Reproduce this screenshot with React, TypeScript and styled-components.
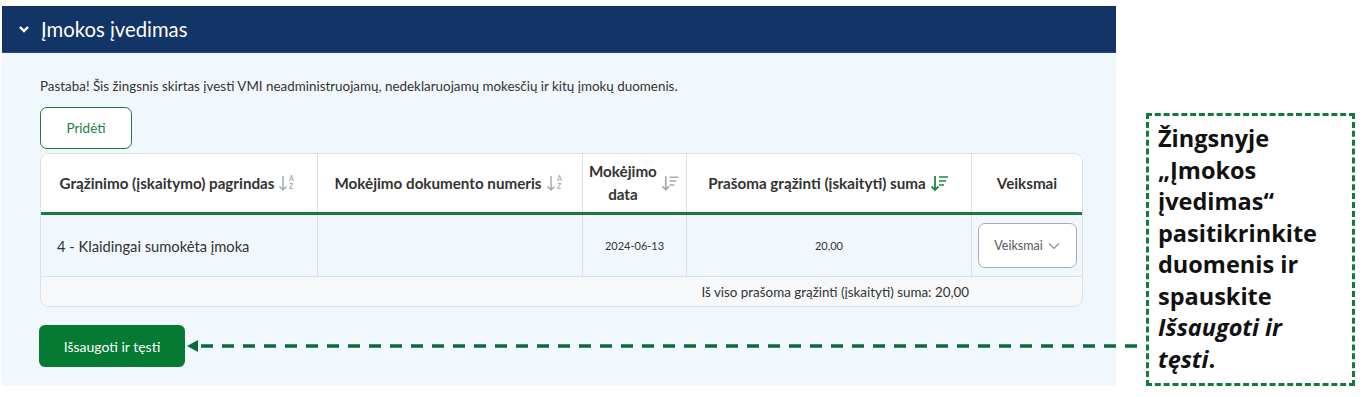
import styled, { createGlobalStyle } from 'styled-components';

const GlobalStyle = createGlobalStyle`
  body {
    margin: 0;
    background: #ffffff;
    font-family: Lato, 'Noto Sans', sans-serif;
    color: #333333;
  }
`;

const Page = styled.div`
  position: relative;
  width: 1365px;
  height: 397px;
  display: flex;
  align-items: flex-start;
  padding: 6px 0 0 2px;
  box-sizing: border-box;
`;

const Panel = styled.section`
  width: 1114px;
  height: 380px;
  display: flex;
  flex-direction: column;
  background: #f1f8fd;
`;

const PanelHeader = styled.div`
  height: 46px;
  display: flex;
  align-items: center;
  gap: 10px;
  padding-left: 15px;
  background: #123467;
  border-bottom: 1px solid #2b4a7a;
  color: #ffffff;
  font-size: 20.3px;
`;

const PanelBody = styled.div`
  flex: 1;
  display: flex;
  flex-direction: column;
  padding: 25px 35px 0 37px;
`;

const Note = styled.p`
  margin: 0 0 12px 1px;
  font-size: 13.4px;
  line-height: 17px;
  color: #333333;
`;

const OutlineButton = styled.button`
  align-self: flex-start;
  width: 92px;
  height: 42px;
  margin-left: 1px;
  background: #ffffff;
  border: 1px solid #1d7d3d;
  border-radius: 7px;
  color: #1d7d3d;
  font-family: inherit;
  font-size: 13.5px;
`;

const Table = styled.div`
  margin: 4px 0 0 1px;
  width: 1041px;
  border: 1px solid #dcdfe3;
  border-radius: 9px;
  overflow: hidden;
  background: #ffffff;
`;

const Row = styled.div<{ $kind: 'head' | 'body' }>`
  display: grid;
  grid-template-columns: 277px 265px 104px 285px 1fr;
  height: ${({ $kind }) => ($kind === 'head' ? '58px' : '61px')};
  background: ${({ $kind }) => ($kind === 'head' ? '#ffffff' : '#f1f8fd')};
  border-bottom: ${({ $kind }) => ($kind === 'head' ? '3px solid #1b7a3a' : '1px solid #dcdfe3')};
`;

const HeadCell = styled.div`
  display: flex;
  align-items: center;
  justify-content: center;
  gap: 4px;
  padding: 0 6px;
  border-right: 1px solid #dcdfe3;
  font-size: 15.2px;
  font-weight: 700;
  color: #333333;
  text-align: center;
  line-height: 23px;
  white-space: nowrap;
  &:last-child {
    border-right: none;
  }
`;

const Cell = styled.div<{ $align?: 'left' | 'center'; $small?: boolean }>`
  display: flex;
  align-items: center;
  justify-content: ${({ $align }) => ($align === 'left' ? 'flex-start' : 'center')};
  padding: 0 ${({ $align }) => ($align === 'left' ? '16px' : '5px')};
  border-right: 1px solid #dcdfe3;
  font-size: ${({ $small }) => ($small ? '11px' : '14.7px')};
  color: #333333;
  &:last-child {
    border-right: none;
  }
`;

const ActionsButton = styled.button`
  width: 99px;
  height: 45px;
  display: flex;
  align-items: center;
  justify-content: center;
  gap: 5px;
  background: #ffffff;
  border: 1px solid #a9adb3;
  border-radius: 7px;
  color: #555a60;
  font-family: inherit;
  font-size: 12.5px;
`;

const TotalRow = styled.div`
  height: 29px;
  display: flex;
  align-items: center;
  justify-content: flex-end;
  padding-right: 113px;
  background: #f7f8fa;
  font-size: 13.4px;
  color: #333333;
`;

const SaveButton = styled.button`
  align-self: flex-start;
  margin-top: 18px;
  width: 146px;
  height: 42px;
  background: #047a32;
  border: none;
  border-radius: 6px;
  color: #ffffff;
  font-family: inherit;
  font-size: 14px;
`;

const Callout = styled.div`
  margin: 107px 0 0 30px;
  width: 209px;
  height: 273px;
  box-sizing: border-box;
  padding: 7px 0 0 9px;
  border: 3px dashed #137a3f;
  font-family: 'Open Sans', 'DejaVu Sans', sans-serif;
  font-weight: 700;
  font-size: 23.5px;
  line-height: 31.5px;
  color: #111111;
  white-space: nowrap;
  em {
    font-style: italic;
  }
`;

const Arrow = styled.svg`
  position: absolute;
  left: 185px;
  top: 338px;
`;

function SortAZ() {
  return (
    <svg width="20" height="20" viewBox="0 0 20 20">
      <path d="M5 3v14M1.5 13.5L5 17l3.5-3.5" stroke="#a6abb1" strokeWidth="1.5" fill="none" />
      <text x="11" y="8" fontSize="7" fill="#a6abb1" fontFamily="Lato, sans-serif">A</text>
      <text x="11" y="16" fontSize="7" fill="#a6abb1" fontFamily="Lato, sans-serif">Z</text>
    </svg>
  );
}

function SortLines({ color }: { color: string }) {
  return (
    <svg width="20" height="20" viewBox="0 0 20 20">
      <path d="M5 3v14M1.5 13.5L5 17l3.5-3.5" stroke={color} strokeWidth="1.8" fill="none" />
      <path d="M9 4h9M9 8h7M9 12h5" stroke={color} strokeWidth="1.6" fill="none" />
    </svg>
  );
}

export default function App() {
  return (
    <>
      <GlobalStyle />
      <Page>
        <Panel>
          <PanelHeader>
            <svg width="14" height="10" viewBox="0 0 14 10">
              <path d="M3 3l4 4 4-4" stroke="#ffffff" strokeWidth="2.4" fill="none" />
            </svg>
            <span>Įmokos įvedimas</span>
          </PanelHeader>
          <PanelBody>
            <Note>
              Pastaba! Šis žingsnis skirtas įvesti VMI neadministruojamų, nedeklaruojamų mokesčių ir kitų įmokų duomenis.
            </Note>
            <OutlineButton>Pridėti</OutlineButton>
            <Table>
              <Row $kind="head">
                <HeadCell>
                  Grąžinimo (įskaitymo) pagrindas <SortAZ />
                </HeadCell>
                <HeadCell>
                  Mokėjimo dokumento numeris <SortAZ />
                </HeadCell>
                <HeadCell>
                  <span>
                    Mokėjimo
                    <br />
                    data
                  </span>
                  <SortLines color="#a6abb1" />
                </HeadCell>
                <HeadCell>
                  Prašoma grąžinti (įskaityti) suma <SortLines color="#1b8a3f" />
                </HeadCell>
                <HeadCell>Veiksmai</HeadCell>
              </Row>
              <Row $kind="body">
                <Cell $align="left">4 - Klaidingai sumokėta įmoka</Cell>
                <Cell />
                <Cell $small>2024-06-13</Cell>
                <Cell $small>20,00</Cell>
                <Cell>
                  <ActionsButton>
                    Veiksmai
                    <svg width="12" height="8" viewBox="0 0 12 8">
                      <path d="M1 1.5l5 5 5-5" stroke="#8a9096" strokeWidth="1.2" fill="none" />
                    </svg>
                  </ActionsButton>
                </Cell>
              </Row>
              <TotalRow>Iš viso prašoma grąžinti (įskaityti) suma: 20,00</TotalRow>
            </Table>
            <SaveButton>Išsaugoti ir tęsti</SaveButton>
          </PanelBody>
        </Panel>
        <Callout>
          Žingsnyje
          <br />
          „Įmokos
          <br />
          įvedimas“
          <br />
          pasitikrinkite
          <br />
          duomenis ir
          <br />
          spauskite
          <br />
          <em>Išsaugoti ir</em>
          <br />
          <em>tęsti</em>.
        </Callout>
        <Arrow width="962" height="16" viewBox="0 0 962 16">
          <path d="M2 8l11-6v12z" fill="#0b6a3a" />
          <line x1="16" y1="8" x2="960" y2="8" stroke="#0b6a3a" strokeWidth="3.5" strokeDasharray="12 9" />
        </Arrow>
      </Page>
    </>
  );
}
